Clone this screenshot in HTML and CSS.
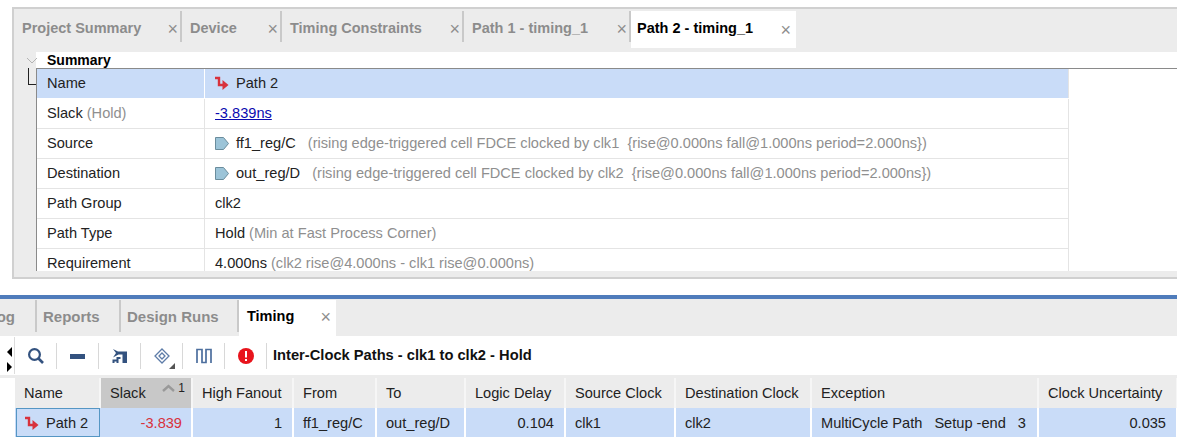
FILE: index.html
```html
<!DOCTYPE html>
<html lang="en">
<head>
  <meta charset="UTF-8">
  <title>Timing</title>
  <link rel="stylesheet" href="styles.css">
</head>
<body>
  <section class="report">
    <div class="tabs report-tabs">
      <div class="tab">Project Summary<span class="close">×</span></div>
      <div class="tab">Device<span class="close">×</span></div>
      <div class="tab">Timing Constraints<span class="close">×</span></div>
      <div class="tab">Path 1 - timing_1<span class="close">×</span></div>
      <div class="tab active">Path 2 - timing_1<span class="close">×</span></div>
    </div>

    <div class="tree">
      <div class="gutter">
        <svg class="chevron" width="12" height="7" viewBox="0 0 12 7"><path d="M1 1l5 5 5-5" fill="none" stroke="#b4b4b4"/></svg>
        <span class="elbow"></span>
      </div>
      <div class="tree-body">
        <div class="summary-title">Summary</div>
        <div class="props">
          <div class="prop selected">
            <div class="key">Name</div>
            <div class="val"><svg class="path-icon" width="14" height="14" viewBox="0 0 14 14"><path d="M0 2h4v7h5" fill="none" stroke="#d8323c" stroke-width="2.400"/><path d="M7.500 4l6 5-6 5z" fill="#d8323c"/></svg>Path 2</div>
          </div>
          <div class="prop">
            <div class="key">Slack <span class="dim">(Hold)</span></div>
            <div class="val"><a href="#">-3.839ns</a></div>
          </div>
          <div class="prop">
            <div class="key">Source</div>
            <div class="val"><svg class="pin" width="14" height="13" viewBox="0 0 14 13"><path d="M.5.500h8l5 6-5 6h-8z" fill="#9cc4d8" stroke="#6a8c9c"/></svg>ff1_reg/C <span class="dim note">(rising edge-triggered cell FDCE clocked by clk1&nbsp; {rise@0.000ns fall@1.000ns period=2.000ns})</span></div>
          </div>
          <div class="prop">
            <div class="key">Destination</div>
            <div class="val"><svg class="pin" width="14" height="13" viewBox="0 0 14 13"><path d="M.5.500h8l5 6-5 6h-8z" fill="#9cc4d8" stroke="#6a8c9c"/></svg>out_reg/D <span class="dim note">(rising edge-triggered cell FDCE clocked by clk2&nbsp; {rise@0.000ns fall@1.000ns period=2.000ns})</span></div>
          </div>
          <div class="prop">
            <div class="key">Path Group</div>
            <div class="val">clk2</div>
          </div>
          <div class="prop">
            <div class="key">Path Type</div>
            <div class="val">Hold <span class="dim">(Min at Fast Process Corner)</span></div>
          </div>
          <div class="prop">
            <div class="key">Requirement</div>
            <div class="val">4.000ns <span class="dim">(clk2 rise@4.000ns - clk1 rise@0.000ns)</span></div>
          </div>
        </div>
      </div>
    </div>
  </section>

  <section class="timing">
    <div class="tabs timing-tabs">
      <div class="tab tab-cut">og</div>
      <div class="tab">Reports</div>
      <div class="tab">Design Runs</div>
      <div class="tab active">Timing<span class="close">×</span></div>
    </div>

    <div class="toolbar">
      <div class="scroller">
        <span class="arrow-left"></span>
        <span class="arrow-right"></span>
      </div>
      <div class="tool">
        <svg width="16" height="16" viewBox="0 0 16 16"><circle cx="6.500" cy="6.500" r="5.400" fill="none" stroke="#33527f" stroke-width="2.200"/><path d="M10.500 10.500l4.500 4.500" stroke="#33527f" stroke-width="2.600"/></svg>
      </div>
      <div class="tool">
        <svg width="16" height="6" viewBox="0 0 16 6"><rect y="1" width="15" height="5" fill="#33527f"/></svg>
      </div>
      <div class="tool">
        <svg width="16" height="16" viewBox="0 0 16 16"><path d="M1 1l5 2.500h9v11.500h-4.500v-8.500h-4l-5.500 3 3-4.500z" fill="#33527f"/><path d="M1.500 15v-2.500h4V15M5.500 12.500V10h3" fill="none" stroke="#33527f" stroke-width="2"/></svg>
      </div>
      <div class="tool has-menu">
        <svg width="16" height="16" viewBox="0 0 16 16"><path d="M8 1l7 7-7 7-7-7z" fill="none" stroke="#5d7ca8" stroke-width="1.300"/><path d="M8 5l3 3-3 3-3-3z" fill="none" stroke="#5d7ca8" stroke-width="1.300"/></svg>
      </div>
      <div class="tool">
        <svg width="16" height="16" viewBox="0 0 16 16"><path d="M1 15V1.500H6V14.500H10V1.500H15V15" fill="none" stroke="#4d6f9e" stroke-width="1.700"/></svg>
      </div>
      <div class="tool">
        <svg width="16" height="16" viewBox="0 0 16 16"><circle cx="8" cy="8" r="8" fill="#e8141c"/><rect x="7" y="3" width="2" height="6.500" fill="#fff"/><rect x="7" y="11" width="2" height="2" fill="#fff"/></svg>
      </div>
      <div class="toolbar-title">Inter-Clock Paths - clk1 to clk2 - Hold</div>
    </div>

    <div class="grid">
      <div class="row head">
        <div class="cell">Name</div>
        <div class="cell sorted">Slack<span class="sort"><svg width="13" height="8" viewBox="0 0 13 8"><path d="M1 7l5.500-5L12 7" fill="none" stroke="#999" stroke-width="2.400"/></svg>1</span></div>
        <div class="cell">High Fanout</div>
        <div class="cell">From</div>
        <div class="cell">To</div>
        <div class="cell">Logic Delay</div>
        <div class="cell">Source Clock</div>
        <div class="cell">Destination Clock</div>
        <div class="cell">Exception</div>
        <div class="cell">Clock Uncertainty</div>
      </div>
      <div class="row body">
        <div class="cell focused"><svg class="path-icon" width="14" height="14" viewBox="0 0 14 14"><path d="M0 2h4v7h5" fill="none" stroke="#d8323c" stroke-width="2.400"/><path d="M7.500 4l6 5-6 5z" fill="#d8323c"/></svg>Path 2</div>
        <div class="cell num bad">-3.839</div>
        <div class="cell num">1</div>
        <div class="cell">ff1_reg/C</div>
        <div class="cell">out_reg/D</div>
        <div class="cell num">0.104</div>
        <div class="cell">clk1</div>
        <div class="cell">clk2</div>
        <div class="cell exception"><span>MultiCycle Path</span><span>Setup -end</span><span>3</span></div>
        <div class="cell num">0.035</div>
      </div>
    </div>
  </section>
</body>
</html>
```

FILE: styles.css
```css
* {
  box-sizing: border-box;
}

html, body {
  margin: 0;
  height: 437px;
  overflow: hidden;
}

body {
  background-color: #fff;
  color: #222;
  font-family: "Liberation Sans", Arial, sans-serif;
  font-size: 14.600px;
  padding-top: 7px;
}

.dim {
  color: #8f8f8f;
}

/* tabs, shared by both panels */
.tabs {
  display: grid;
  align-items: start;
  background-color: #ececec;
  font-weight: bold;
  font-size: 14.500px;
  color: #8c8c8c;
}

.tab {
  position: relative;
  display: flex;
  align-items: center;
  padding-left: 8px;
  white-space: nowrap;
  border-right: 2px solid #c9c9c9;
}

.tab.active {
  background-color: #fff;
  color: #000;
  border-right: none;
}

.close {
  position: absolute;
  color: #8e8e8e;
  font-weight: normal;
  font-size: 18px;
}

/* upper report panel */
.report {
  margin-left: 12px;
  height: 272px;
  background-color: #ececec;
  border: 2px solid #d0d0d0;
  border-right: none;
  overflow: hidden;
}

.report-tabs {
  grid-template-columns: 168px 100px 182px 167px 165px;
  height: 37px;
  margin-top: 2px;
}

.report-tabs .tab {
  height: 31px;
  padding-top: 2px;
}

.report-tabs .tab.active {
  height: 37px;
  padding: 0 0 4px 6px;
}

.report-tabs .close {
  right: 2px;
  top: 8px;
}

.report-tabs .tab.active .close {
  right: 5px;
  top: 9px;
}

.tree {
  display: flex;
  margin-top: 4px;
  height: 219px;
}

.gutter {
  position: relative;
  width: 22px;
  flex-shrink: 0;
}

.chevron {
  position: absolute;
  left: 12px;
  top: 5px;
}

.elbow {
  position: absolute;
  left: 14px;
  top: 16px;
  width: 8px;
  height: 17px;
  border-left: 1px solid #222;
  border-bottom: 1px solid #222;
}

.tree-body {
  flex: 1;
  min-width: 0;
  background-color: #fff;
}

.summary-title {
  height: 16px;
  padding-left: 11px;
  font-size: 14px;
  font-weight: bold;
  color: #000;
  line-height: 17px;
  overflow: hidden;
}

.props {
  border-top: 1px solid #8a8a8a;
  border-left: 1px solid #8a8a8a;
  height: 203px;
  overflow: hidden;
}

.prop {
  display: grid;
  grid-template-columns: 168px 864px;
  width: 1032px;
  height: 30px;
  align-items: stretch;
  border-bottom: 1px solid #e4e4e4;
  line-height: 29px;
}

.prop.selected {
  background-color: #c9dcf8;
  border-bottom-color: #fff;
}

.key {
  padding-left: 10px;
  border-right: 1px solid #e4e4e4;
}

.prop.selected .key {
  border-right-color: #fff;
}

.val {
  padding-left: 10px;
  border-right: 1px solid #e4e4e4;
  white-space: nowrap;
}

.val a {
  color: #0a0ab0;
}

.note {
  margin-left: 8px;
}

.val svg {
  vertical-align: -2px;
  margin-right: 7px;
}

/* lower timing panel */
.timing {
  margin-top: 16px;
  border-top: 4px solid #4f7cbb;
}

.timing-tabs {
  grid-template-columns: 37px 84px 118px 97px;
  height: 37px;
  padding-top: 1px;
  font-size: 15px;
}

.timing-tabs .tab {
  height: 32px;
  padding-left: 6px;
}

.timing-tabs .tab.active {
  height: 36px;
  padding: 0 0 4px 8px;
  font-size: 14.500px;
}

.timing-tabs .close {
  right: 5px;
  top: 7px;
}

.tab-cut {
  justify-content: flex-end;
  padding-right: 20px;
}

.toolbar {
  display: flex;
  align-items: center;
  height: 42px;
  background-color: #fff;
  border-bottom: 3px solid #ececec;
}

.scroller {
  width: 15px;
  height: 37px;
  padding-left: 7px;
  padding-top: 10px;
  border-right: 1px solid #dcdcdc;
  display: flex;
  flex-direction: column;
  gap: 5px;
}

.arrow-left {
  width: 0;
  height: 0;
  border: 5px solid transparent;
  border-left: none;
  border-right-color: #000;
}

.arrow-right {
  width: 0;
  height: 0;
  border: 5px solid transparent;
  border-right: none;
  border-left-color: #000;
}

.tool {
  position: relative;
  width: 42px;
  height: 26px;
  display: flex;
  align-items: center;
  justify-content: center;
  border-right: 1px solid #d8d8d8;
}

.has-menu::after {
  content: "";
  position: absolute;
  right: 7px;
  bottom: 0;
  border: 3px solid transparent;
  border-right-color: #555;
  border-bottom-color: #555;
}

.toolbar-title {
  padding: 0 0 2px 6px;
  font-size: 14.700px;
  font-weight: bold;
  color: #111;
}

/* results grid */
.grid {
  padding-left: 15px;
}

.row {
  display: grid;
  grid-template-columns: 86px 92px 101px 83px 89px 100px 110px 136px 227px 139px;
}

.head {
  height: 30px;
  background-color: #ececec;
}

.head .cell {
  display: flex;
  align-items: center;
  padding-left: 9px;
  border-right: 2px solid #f6f6f6;
  position: relative;
  white-space: nowrap;
}

.head .sorted {
  background-color: #c8c8c8;
}

.sort {
  position: absolute;
  right: 6px;
  top: 3px;
  display: flex;
  align-items: center;
  gap: 3px;
  font-size: 12px;
}

.body {
  height: 29px;
  background-color: #c9dcf8;
}

.body .cell {
  display: flex;
  align-items: center;
  padding-left: 9px;
  padding-right: 10px;
  border-right: 2px solid #fff;
  white-space: nowrap;
}

.body .num {
  justify-content: flex-end;
}

.body .bad {
  color: #d8323c;
  padding-right: 9px;
}

.body .focused {
  border: 1px solid #5596c4;
  margin-left: 1px;
  margin-right: 1px;
  padding-left: 8px;
}

.focused svg {
  margin-right: 7px;
}

.exception {
  gap: 12px;
}
```
